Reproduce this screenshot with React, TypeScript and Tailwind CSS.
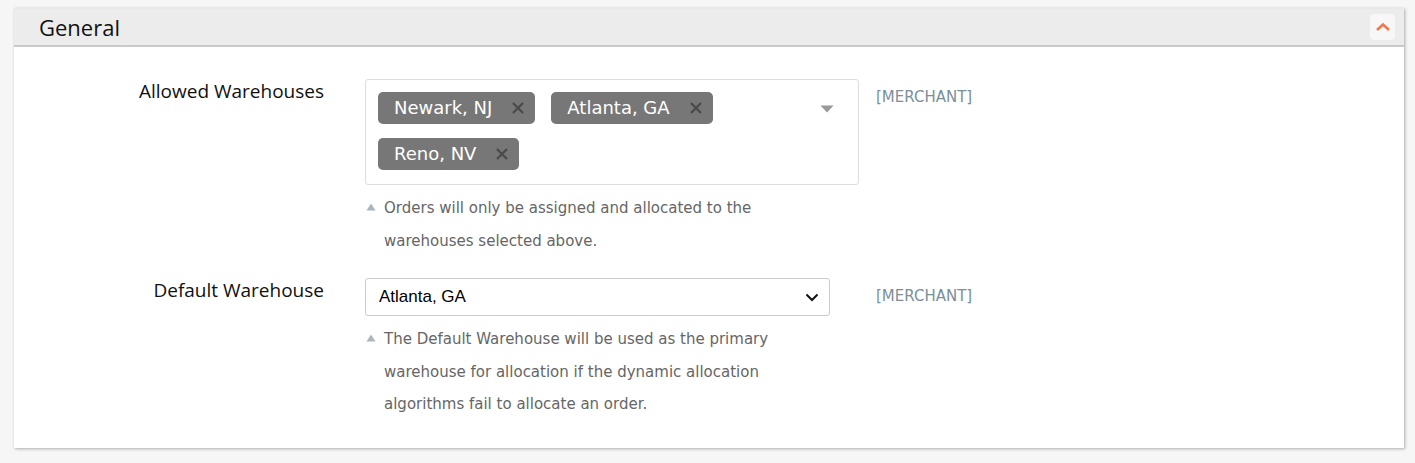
import React from "react";

const tahoma = { fontFamily: '"DejaVu Sans", Tahoma, Verdana, sans-serif' };

function Chip({ label }: { label: string }) {
  return (
    <div
      className="flex h-[32px] items-center rounded-[5px] bg-[#777777] pl-[16px] pr-[10px] text-[18px] text-white"
      style={tahoma}
    >
      <span className="leading-none">{label}</span>
      <svg className="ml-[19px]" width="14" height="14" viewBox="0 0 14 14">
        <path d="M2 2 L12 12 M12 2 L2 12" stroke="#4a4a4a" strokeWidth="2.3" strokeLinecap="butt" />
      </svg>
    </div>
  );
}

function Hint({ lines }: { lines: string[] }) {
  return (
    <div className="mt-[7px] flex text-[15px] leading-[32.5px] text-[#666666]" style={tahoma}>
      <div className="flex h-[32px] w-[19px] shrink-0 items-center pl-[1px] pb-[3px]">
        <svg width="10" height="8" viewBox="0 0 10 8">
          <path d="M5 0.5 L9.5 7.5 L0.5 7.5 Z" fill="#a9b6bd" />
        </svg>
      </div>
      <div>
        {lines.map((l, i) => (
          <div key={i}>{l}</div>
        ))}
      </div>
    </div>
  );
}

function Merchant() {
  return (
    <div className="pt-[7px] text-[15px] leading-[22px] text-[#7b8f99]" style={tahoma}>
      [MERCHANT]
    </div>
  );
}

const labelFont = { fontFamily: '"Open Sans", "Noto Sans", sans-serif' };

export default function App() {
  return (
    <div className="min-h-[463px] w-[1415px] bg-[#f6f6f6] pt-[8px] pl-[14px]">
      <div className="w-[1390px] bg-white shadow-[1px_1px_3px_rgba(0,0,0,0.3)] border-t border-[#e8e8e8]">
        <div className="flex h-[38px] items-center justify-between border-b-2 border-[#c9c9c9] bg-[#ececec] pl-[25px] pr-[9px]">
          <span className="text-[22px] leading-none text-[#111111]" style={labelFont}>
            General
          </span>
          <div className="flex h-[26px] w-[25px] items-center justify-center rounded-[4px] bg-[#f7f7f7]">
            <svg width="16" height="10" viewBox="0 0 16 10">
              <path d="M2 8 L8 2.5 L14 8" fill="none" stroke="#f0784a" strokeWidth="2.6" strokeLinejoin="miter" />
            </svg>
          </div>
        </div>

        <div className="pt-[32px] pb-[27px]">
          {/* Row 1 */}
          <div className="flex">
            <div className="w-[310px] shrink-0 text-right text-[19px] leading-[24px] text-[#111111]" style={labelFont}>
              Allowed Warehouses
            </div>
            <div className="ml-[41px] w-[494px] shrink-0">
              <div className="relative h-[106px] rounded-[3px] border border-[#dddddd] pl-[12px] pt-[12px]">
                <div className="flex w-[420px] flex-wrap gap-x-[16px] gap-y-[14px]">
                  <Chip label="Newark, NJ" />
                  <Chip label="Atlanta, GA" />
                  <Chip label="Reno, NV" />
                </div>
                <svg className="absolute right-[24px] top-[25px]" width="14" height="8" viewBox="0 0 14 8">
                  <path d="M0.5 0.5 L13.5 0.5 L7 7.5 Z" fill="#999999" />
                </svg>
              </div>
              <Hint lines={["Orders will only be assigned and allocated to the", "warehouses selected above."]} />
            </div>
            <div className="ml-[17px]">
              <Merchant />
            </div>
          </div>

          {/* Row 2 */}
          <div className="mt-[21px] flex">
            <div className="w-[310px] shrink-0 text-right text-[19px] leading-[24px] text-[#111111]" style={labelFont}>
              Default Warehouse
            </div>
            <div className="ml-[41px] w-[465px] shrink-0">
              <div
                className="flex h-[38px] items-center justify-between rounded-[3px] border border-[#cccccc] pl-[13px] pr-[10px] text-[17px] text-black"
                style={{ fontFamily: '"Liberation Sans", Arial, sans-serif' }}
              >
                <span>Atlanta, GA</span>
                <svg width="14" height="9" viewBox="0 0 14 9">
                  <path d="M1.5 1.5 L7 7 L12.5 1.5" fill="none" stroke="#111111" strokeWidth="2" />
                </svg>
              </div>
              <Hint
                lines={[
                  "The Default Warehouse will be used as the primary",
                  "warehouse for allocation if the dynamic allocation",
                  "algorithms fail to allocate an order.",
                ]}
              />
            </div>
            <div className="ml-[46px]">
              <Merchant />
            </div>
          </div>
        </div>
      </div>
    </div>
  );
}
